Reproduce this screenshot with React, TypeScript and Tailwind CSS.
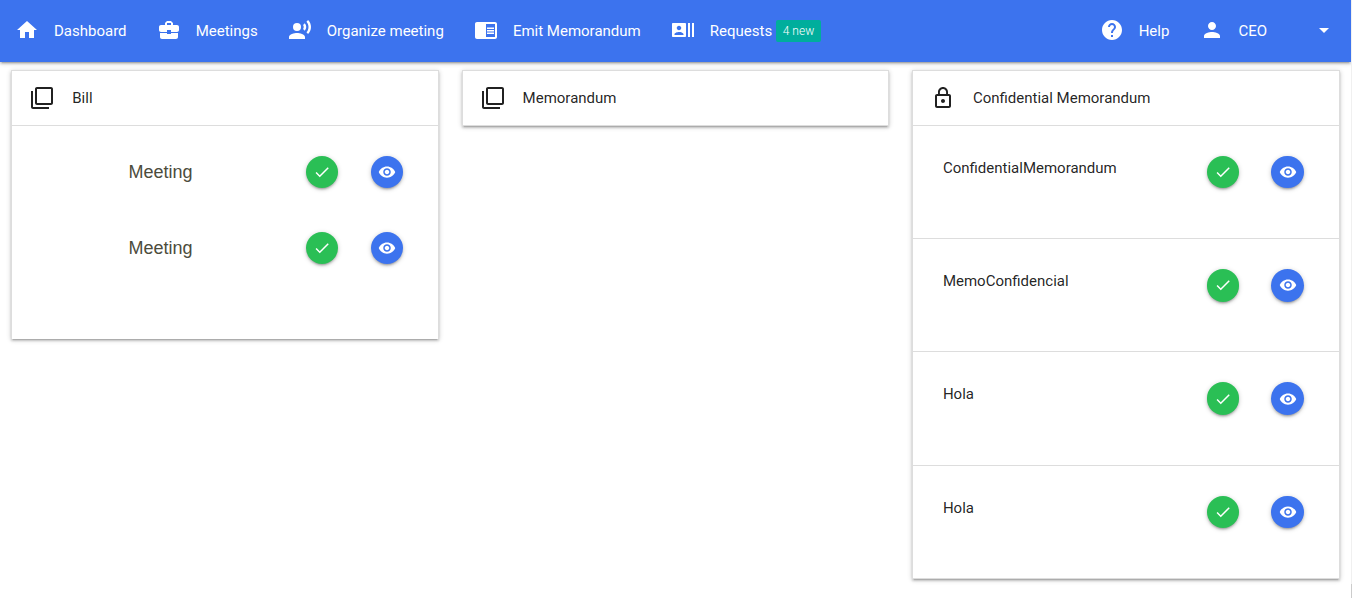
import React from "react";
import {
  MdArrowDropDown, MdBusinessCenter, MdCheck, MdChromeReaderMode, MdFilterNone, MdHelp, MdHome,
  MdLockOutline, MdPerson, MdRecentActors, MdRecordVoiceOver, MdRemoveRedEye,
} from "react-icons/md";

const SHADOW =
  "shadow-[0_2px_2px_0_rgba(0,0,0,0.14),0_3px_1px_-2px_rgba(0,0,0,0.12),0_1px_5px_0_rgba(0,0,0,0.2)]";

function NavItem({ icon, label, children }: { icon: React.ReactNode; label: string; children?: React.ReactNode }) {
  return (
    <a className="flex h-full items-center px-[15px]">
      <span className="mr-[15px] mb-0.5 text-2xl">{icon}</span>
      <span>{label}</span>
      {children}
    </a>
  );
}

function Card({ icon, title, children }: { icon: React.ReactNode; title: string; children?: React.ReactNode }) {
  return (
    <section className="flex-1 px-[11.25px]">
      <div className={`border-x border-t border-[#ddd] bg-white ${SHADOW}`}>
        <header className="flex h-[55.5px] items-center border-b border-[#ddd] px-[15px]">
          <span className="mr-[15px] flex w-[30px] justify-center text-2xl">{icon}</span>
          <span>{title}</span>
        </header>
        {children}
      </div>
    </section>
  );
}

function Actions() {
  return (
    <div className="flex gap-[32.3px]">
      <button className={`flex size-[32.4px] items-center justify-center rounded-full bg-[#2abf55] text-lg text-white ${SHADOW}`}>
        <MdCheck />
      </button>
      <button className={`flex size-[32.4px] items-center justify-center rounded-full bg-[#3c73ee] text-lg text-white ${SHADOW}`}>
        <MdRemoveRedEye />
      </button>
    </div>
  );
}

const memos = ["ConfidentialMemorandum", "MemoConfidencial", "Hola", "Hola"];

export default function App() {
  return (
    <div className="flex h-[598px] overflow-hidden bg-white font-['Roboto',sans-serif] text-[15px] leading-[22.5px] text-black/87">
      <div className="w-[1351px] shrink-0">
        <nav className={`flex h-[62px] items-center justify-between bg-[#3c73ee] text-white ${SHADOW}`}>
          <div className="flex h-full gap-x-[0.08px]">
            <NavItem icon={<MdHome />} label="Dashboard" />
            <NavItem icon={<MdBusinessCenter />} label="Meetings" />
            <NavItem icon={<MdRecordVoiceOver />} label="Organize meeting" />
            <NavItem icon={<MdChromeReaderMode />} label="Emit Memorandum" />
            <NavItem icon={<MdRecentActors />} label="Requests">
              <span className="ml-[3.8px] h-[22px] w-[45px] rounded-xs bg-[#00ae9c] text-center text-xs leading-[23px] font-light">4 new</span>
            </NavItem>
          </div>
          <div className="flex h-full items-center">
            <NavItem icon={<MdHelp />} label="Help" />
            <NavItem icon={<MdPerson className="-mr-[0.6px] ml-[0.6px]" />} label="CEO" />
            <span className="mr-[15px] mb-0.5 ml-[30px] text-2xl"><MdArrowDropDown /></span>
          </div>
        </nav>
        <main className="flex items-start pt-[7.5px]">
          <Card icon={<MdFilterNone />} title="Bill">
            <div className="h-[212.5px] pt-[30px] pr-[35.2px] pl-[116.2px]">
              {[0, 1].map((i) => (
                <div key={i} className="mb-[43.6px] flex items-center justify-between">
                  <span className="font-['Liberation_Sans',sans-serif] text-lg text-[#4c4c3c]">Meeting</span>
                  <Actions />
                </div>
              ))}
            </div>
          </Card>
          <Card icon={<MdFilterNone />} title="Memorandum" />
          <Card icon={<MdLockOutline />} title="Confidential Memorandum">
            {memos.map((name, i) => (
              <div key={i} className="flex h-[113.2px] items-start justify-between border-b border-[#ddd] pt-[29.95px] pr-[34.95px] pl-[30px]">
                <span className="pt-[1.15px]">{name}</span>
                <Actions />
              </div>
            ))}
          </Card>
        </main>
      </div>
      <div className="flex w-px flex-col bg-[#f0f0f0]">
        <div className="mt-auto h-[14px] bg-[#ccc]" />
      </div>
    </div>
  );
}
